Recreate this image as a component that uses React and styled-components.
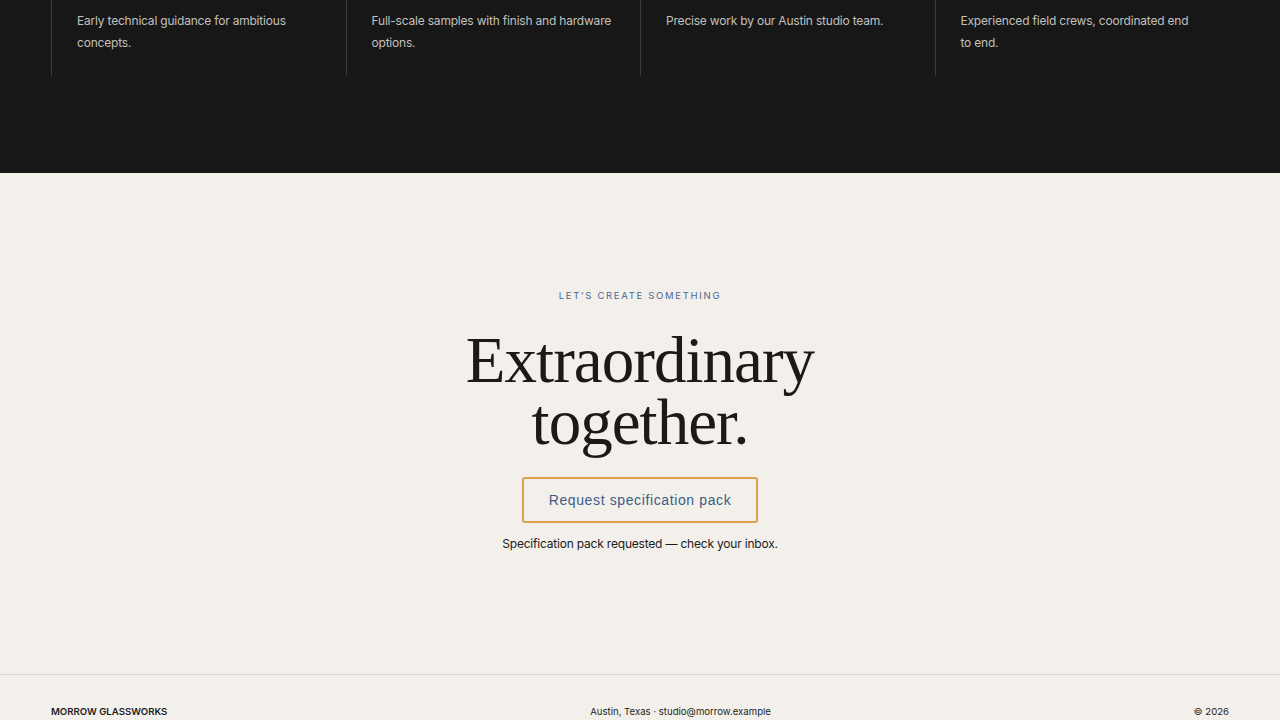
import styled, { createGlobalStyle } from 'styled-components';

const GlobalStyle = createGlobalStyle`
    html, body {
        margin: 0;
        padding: 0;
        background-color: #f3f0eb;
    }
    body {
        font-family: Inter, "Noto Sans", sans-serif;
        -webkit-font-smoothing: antialiased;
    }
`;

const DarkBand = styled.section`
    background-color: #171717;
    padding: 0 51px 97px;
`;

const ServiceGrid = styled.div`
    display: grid;
    grid-template-columns: repeat(4, 1fr);
`;

const ServiceColumn = styled.div`
    border-left: 1px solid #3b3b3b;
    padding: 10px 27px 22px 25px;
    min-height: 44px;
`;

const ServiceText = styled.p`
    margin: 0;
    font-size: 12px;
    line-height: 22px;
    letter-spacing: -0.2px;
    color: #c2c0bc;
`;

const CallToAction = styled.section`
    display: flex;
    flex-direction: column;
    align-items: center;
    padding: 116px 0 120px;
    text-align: center;
`;

const Eyebrow = styled.span`
    font-size: 9.5px;
    line-height: 14px;
    letter-spacing: 1.7px;
    text-transform: uppercase;
    color: #4c6690;
`;

const Headline = styled.h2`
    margin: 26px 0 0;
    font-family: "Liberation Serif", "Times New Roman", serif;
    font-weight: 400;
    font-size: 65px;
    line-height: 62px;
    letter-spacing: -0.015em;
    color: #1b1a19;
`;

const RequestButton = styled.button`
    margin-top: 24px;
    padding: 14px 25px;
    background: transparent;
    border: 2px solid #dca24a;
    border-radius: 3px;
    font-family: "Liberation Sans", Arial, sans-serif;
    font-size: 14px;
    line-height: 14px;
    letter-spacing: 0.62px;
    color: #3e5b86;
    cursor: pointer;
`;

const Confirmation = styled.p`
    margin: 11px 0 0;
    font-size: 12px;
    line-height: 20px;
    letter-spacing: -0.2px;
    color: #1a1a1a;
`;

const Footer = styled.footer`
    border-top: 1px solid #dcd8d1;
    padding: 30px 51px 28px;
    display: flex;
    justify-content: space-between;
    align-items: center;
    font-size: 9.6px;
    line-height: 14px;
    color: #1d1d1d;
`;

const Brand = styled.span`
    font-weight: 600;
    text-transform: uppercase;
`;

const services = [
    'Early technical guidance for ambitious concepts.',
    'Full-scale samples with finish and hardware options.',
    'Precise work by our Austin studio team.',
    'Experienced field crews, coordinated end to end.',
];

const App = () => (
    <>
        <GlobalStyle />
        <DarkBand>
            <ServiceGrid>
                {services.map((text, index) => (
                    <ServiceColumn key={index}>
                        <ServiceText>{text}</ServiceText>
                    </ServiceColumn>
                ))}
            </ServiceGrid>
        </DarkBand>
        <CallToAction>
            <Eyebrow>Let’s create something</Eyebrow>
            <Headline>
                Extraordinary
                <br />
                together.
            </Headline>
            <RequestButton type="button">Request specification pack</RequestButton>
            <Confirmation>Specification pack requested — check your inbox.</Confirmation>
        </CallToAction>
        <Footer>
            <Brand>Morrow Glassworks</Brand>
            <span>Austin, Texas · studio@morrow.example</span>
            <span>© 2026</span>
        </Footer>
    </>
);

export default App;
